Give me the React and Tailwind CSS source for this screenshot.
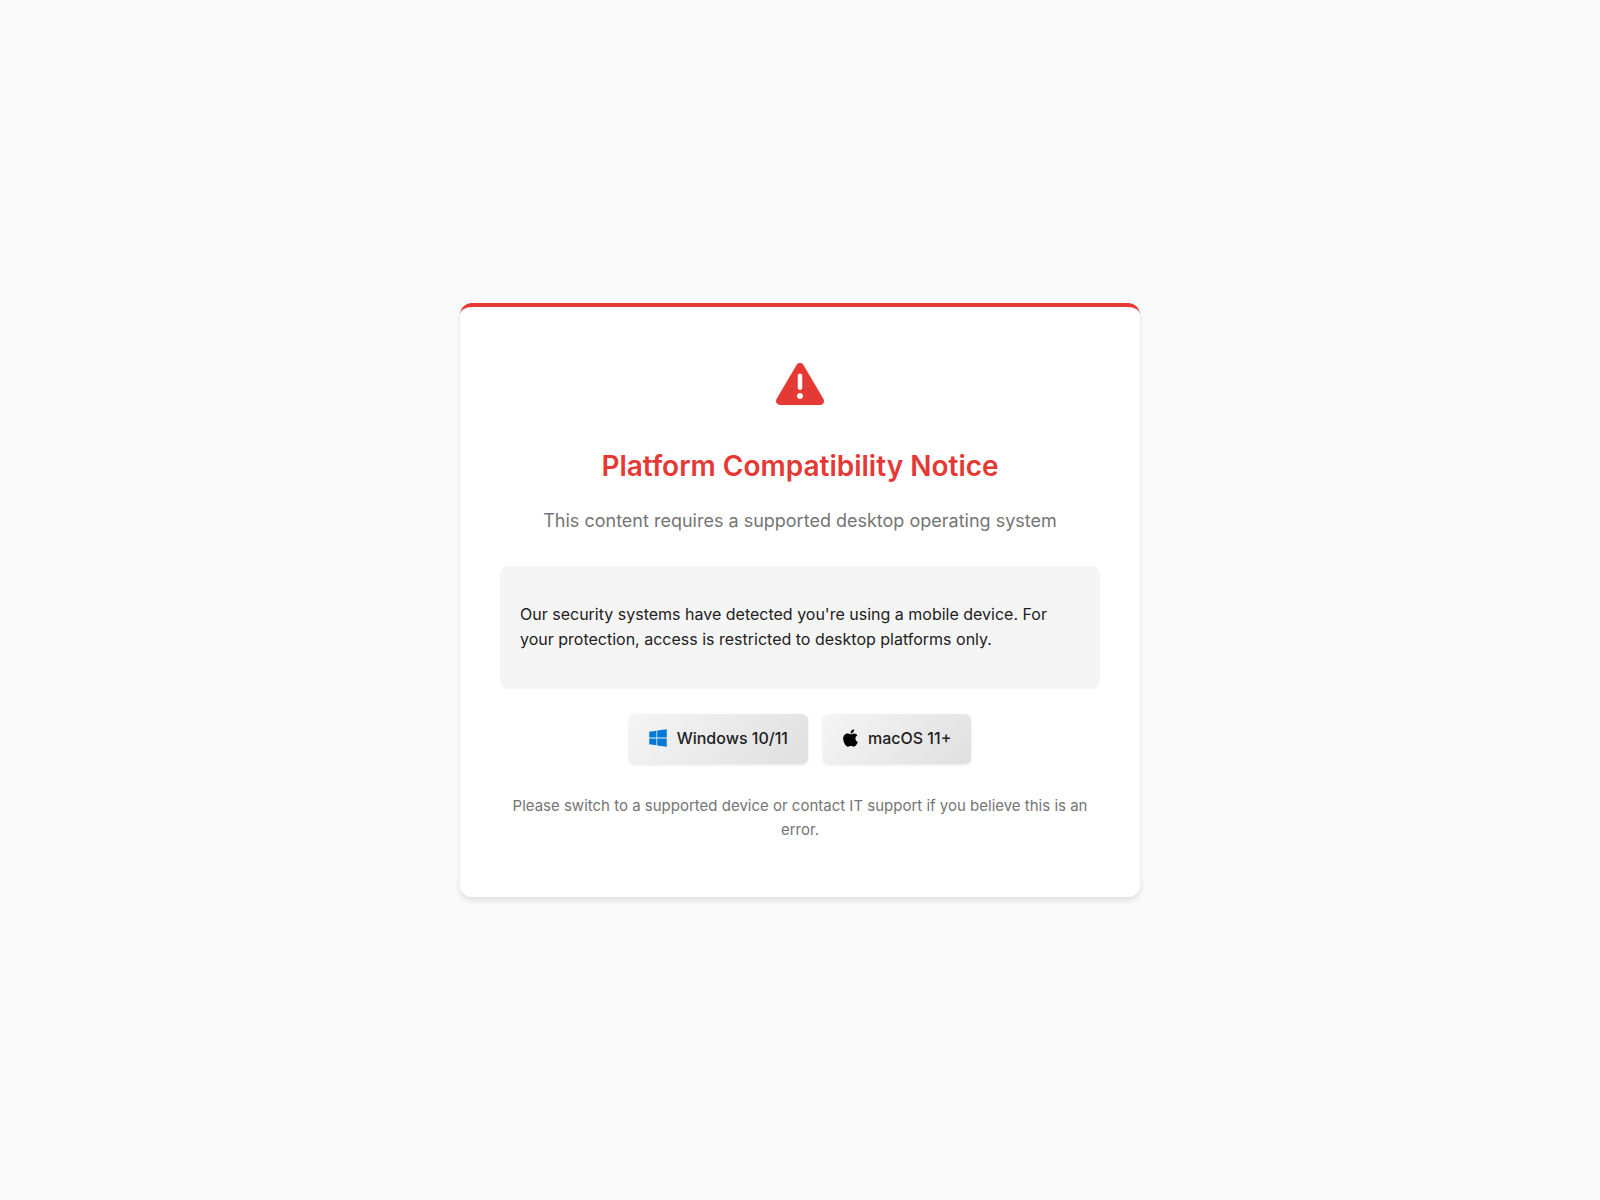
import React from 'react';
import { FaApple, FaWindows } from 'react-icons/fa6';

const platforms = [
  { name: 'Windows 10/11', Icon: FaWindows, iconClass: 'w-[18px] text-[#0078d7]' },
  { name: 'macOS 11+', Icon: FaApple, iconClass: 'w-[15px] text-black' },
];

const WarningIcon = () => (
  <svg viewBox="0 0 512 512" fill="currentColor" className="size-12" aria-hidden="true">
    <path d="M506.3 417l-213.3-364c-16.33-28-57.54-28-73.86 0l-213.2 364C-10.59 444.9 9.849 480 42.74 480h426.6C502.1 480 522.6 445 506.3 417zM232 168c0-13.25 10.75-24 24-24S280 154.8 280 168v128c0 13.25-10.75 24-23.1 24S232 309.3 232 296V168zM256 416c-17.36 0-31.44-14.08-31.44-31.44c0-17.36 14.07-31.44 31.44-31.44s31.44 14.08 31.44 31.44C287.4 401.9 273.4 416 256 416z" />
  </svg>
);

const PlatformBadge = ({ name, Icon, iconClass }) => (
  <li className="flex items-center gap-[10px] rounded-md px-5 pt-3 pb-[14px] font-medium leading-6 bg-linear-135 from-[#f5f5f5] to-[#e0e0e0] shadow-[0_1px_3px_rgba(0,0,0,0.1)]">
    <Icon className={`h-5 ${iconClass}`} aria-hidden="true" />
    <span>{name}</span>
  </li>
);

const App = () => {
  return (
    <div className="min-h-screen flex items-center justify-center bg-[#fafafa] p-5 font-['Inter',sans-serif] text-base text-[#212121]">
      <main className="w-full max-w-[680px] rounded-xl border-t-4 border-[#e53935] bg-white p-10 text-center shadow-[0_4px_6px_rgba(0,0,0,0.1)]">

        {/* Warning icon */}
        <div className="flex h-[74px] items-center justify-center text-[#e53935]">
          <WarningIcon />
        </div>

        <h1 className="mt-[23px] text-[28px] font-semibold leading-[45px] text-[#e53935]">
          Platform Compatibility Notice
        </h1>
        <p className="mt-[17px] text-lg leading-[29px] text-[#757575]">
          This content requires a supported desktop operating system
        </p>

        <div className="mt-[31px] rounded-lg bg-[#f5f5f5] px-5 pt-9 pb-[37px] text-left leading-[25px]">
          <p>
            Our security systems have detected you're using a mobile device. For your protection,
            access is restricted to desktop platforms only.
          </p>
        </div>

        {/* Supported platforms */}
        <ul className="mt-[25px] flex flex-wrap justify-center gap-[15px]">
          {platforms.map((platform) => (
            <PlatformBadge key={platform.name} {...platform} />
          ))}
        </ul>

        <p className="mt-[30px] mb-[15px] text-[15px] leading-6 text-[#757575]">
          Please switch to a supported device or contact IT support if you believe this is an error.
        </p>
      </main>
    </div>
  );
};

export default App;
